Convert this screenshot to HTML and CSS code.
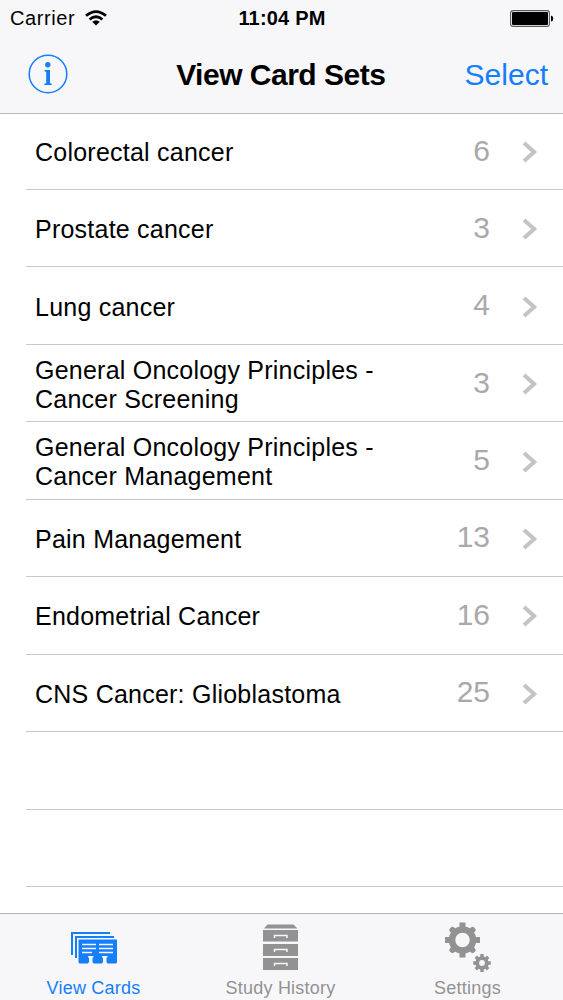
FILE: index.html
```html
<!DOCTYPE html>
<html lang="en">
<head>
<meta charset="utf-8">
<title>View Card Sets</title>
<link rel="stylesheet" href="styles.css">
</head>
<body>
<div class="app">
  <header class="header">
    <div class="status">
      <div class="carrier"><span>Carrier</span>
        <svg class="wifi" width="22" height="16" viewBox="0 0 22 16"><g fill="none" stroke="#000" stroke-width="2.7"><path d="M1 5.8Q11 -2.7 21 5.8"/><path d="M4.6 9.5Q11 4 17.4 9.5"/></g><path d="M7.2 11.8Q11 8.7 14.8 11.8L11 15.5Z"/></svg>
      </div>
      <span class="time">11:04 PM</span>
      <svg class="battery" width="44" height="18" viewBox="0 0 44 18"><rect x=".6" y=".6" width="38.8" height="15.8" rx="2.5" fill="none" stroke="#5c5a5b" stroke-width="1.1"/><rect x="2" y="2" width="36" height="13" rx="1" fill="#000"/><path d="M41 5.5Q43.3 6 43.3 8.5T41 11.5Z"/></svg>
    </div>
    <nav class="nav">
      <svg class="info" width="40" height="40" viewBox="0 0 40 40" fill="#147efb"><circle cx="20" cy="20" r="18.8" fill="none" stroke="#147efb" stroke-width="1.5"/><circle cx="19.8" cy="10.8" r="2.7"/><path d="M16.5 16H22V29.3L23.8 29.8V31H16.3V29.8L18.2 29.3V17.7L16.5 17.2Z"/></svg>
      <h1 class="title">View Card Sets</h1>
      <span class="select">Select</span>
    </nav>
  </header>
  <main class="list">
    <div class="row"><span class="name">Colorectal cancer</span><span class="count">6</span><svg class="chevron" width="16" height="22" viewBox="0 0 16 22"><path d="M2 2L12.2 11L2 20"/></svg></div>
    <div class="row"><span class="name">Prostate cancer</span><span class="count">3</span><svg class="chevron" width="16" height="22" viewBox="0 0 16 22"><path d="M2 2L12.2 11L2 20"/></svg></div>
    <div class="row"><span class="name">Lung cancer</span><span class="count">4</span><svg class="chevron" width="16" height="22" viewBox="0 0 16 22"><path d="M2 2L12.2 11L2 20"/></svg></div>
    <div class="row"><span class="name">General Oncology Principles -<br>Cancer Screening</span><span class="count">3</span><svg class="chevron" width="16" height="22" viewBox="0 0 16 22"><path d="M2 2L12.2 11L2 20"/></svg></div>
    <div class="row"><span class="name">General Oncology Principles -<br>Cancer Management</span><span class="count">5</span><svg class="chevron" width="16" height="22" viewBox="0 0 16 22"><path d="M2 2L12.2 11L2 20"/></svg></div>
    <div class="row"><span class="name">Pain Management</span><span class="count">13</span><svg class="chevron" width="16" height="22" viewBox="0 0 16 22"><path d="M2 2L12.2 11L2 20"/></svg></div>
    <div class="row"><span class="name">Endometrial Cancer</span><span class="count">16</span><svg class="chevron" width="16" height="22" viewBox="0 0 16 22"><path d="M2 2L12.2 11L2 20"/></svg></div>
    <div class="row"><span class="name">CNS Cancer: Glioblastoma</span><span class="count">25</span><svg class="chevron" width="16" height="22" viewBox="0 0 16 22"><path d="M2 2L12.2 11L2 20"/></svg></div>
    <div class="row"></div>
    <div class="row"></div>
  </main>
  <footer class="tabs">
    <div class="tab active">
      <svg class="icon" width="48" height="50" viewBox="0 0 48 50"><g fill="none" stroke="#147efb" stroke-width="2"><path d="M2 33V11H40"/><path d="M6 36V15H44"/></g><path fill="#147efb" d="M8.500 17.500H47V40Q47 41.500 45.500 41.500H37.500L36.500 40V35.500H37.500V34H32V35.500H33V40L32 41.500H23.500L22.500 40V35.500H23.500V34H18V35.500H19V40L18 41.500H10Q8.500 41.500 8.500 40Z"/><path fill="none" stroke="#f7f7fa" stroke-width="1.7" d="M12 22.500H26M12 26.500H26M12 30.500H22M29 22.500H43M29 26.500H43M29 30.500H43"/></svg>
      <span class="label">View Cards</span>
    </div>
    <div class="tab">
      <svg class="icon" width="48" height="50" viewBox="0 0 48 50" fill="#929292"><path d="M10.500 2.500H36.500L40.500 6.500H7Z"/><path d="M6 8H41V19.500H6ZM6 22H41V34H6ZM6 36H41V48H6Z"/><path fill="none" stroke="#f7f7fa" stroke-width="1.500" d="M17.500 16V13.500H30V16M17.500 30V27.500H30V30M17.500 44V41.500H30V44"/></svg>
      <span class="label">Study History</span>
    </div>
    <div class="tab">
      <svg class="icon" width="48" height="50" viewBox="0 0 48 50"><g stroke="#929292" fill="none"><circle cx="18.500" cy="18" r="10.500" stroke-width="6.500"/><path stroke-width="6" d="M18.500 .5V7M18.500 29V35.500M1 18H8M29 18H36"/><path stroke-width="6" stroke-linecap="round" d="M8.500 8L11 10.500M26 25.500L28.500 28M28.500 8L26 10.500M11 25.500L8.500 28"/><circle cx="38" cy="41" r="4.800" stroke-width="3.800"/><path stroke-width="3.400" d="M38 32V36M38 46V50M29.200 41H33M43 41H46.800M31.800 34.800L34.500 37.500M41.500 44.500L44.200 47.200M44.200 34.800L41.500 37.500M34.500 44.500L31.800 47.200"/></g></svg>
      <span class="label">Settings</span>
    </div>
  </footer>
</div>
</body>
</html>
```
FILE: styles.css
```css
* { box-sizing: border-box; }
body { margin: 0; background: #fff; color: #000; font-family: "Liberation Sans", Arial, sans-serif; }
.app { width: 563px; height: 1000px; display: flex; flex-direction: column; overflow: hidden; }
.header { height: 113.500px; flex: none; background: #f7f7fa; border-bottom: 1px solid #b9b9bb; }
.status { height: 36px; display: grid; grid-template-columns: 1fr auto 1fr; align-items: center; padding: 1px 9px 0 10px; font-size: 20px; }
.carrier { display: flex; align-items: center; gap: 10px; letter-spacing: .6px; }
.wifi { margin-top: -2px; }
.time { font-weight: bold; letter-spacing: .2px; }
.battery { justify-self: end; }
.nav { height: 77px; display: grid; grid-template-columns: 1fr auto 1fr; align-items: center; padding: 0 15px 0 27.500px; }
.title { margin: 0 14px 0 0; font-size: 30px; line-height: 36px; font-weight: bold; letter-spacing: -.5px; }
.select { justify-self: end; font-size: 30px; color: #147efb; }
.info { margin-top: -1px; }
.list { flex: 1; min-height: 0; overflow: hidden; padding-left: 26px; }
.row { height: 77.450px; display: flex; align-items: center; padding: 2px 25px 0 9px; border-bottom: 1px solid #c8c7cc; }
.row:first-child { height: 76.500px; }
.name { flex: 1; padding-top: 1px; font-size: 25px; line-height: 29px; letter-spacing: .23px; }
.count { font-size: 30px; line-height: 36px; color: #a9a9ac; margin: -3px 32px 0 0; }
.chevron { flex: none; fill: none; stroke: #c4c4c8; stroke-width: 4; }
.tabs { height: 87.500px; flex: none; display: grid; grid-template-columns: repeat(3, 187px); justify-content: start; background: #f7f7fa; border-top: 1px solid #b4b4b6; }
.tab { display: flex; flex-direction: column; align-items: center; padding-top: 8px; color: #929292; }
.active { color: #147efb; }
.label { margin-top: 6px; font-size: 18px; line-height: 21px; letter-spacing: .22px; }
```
